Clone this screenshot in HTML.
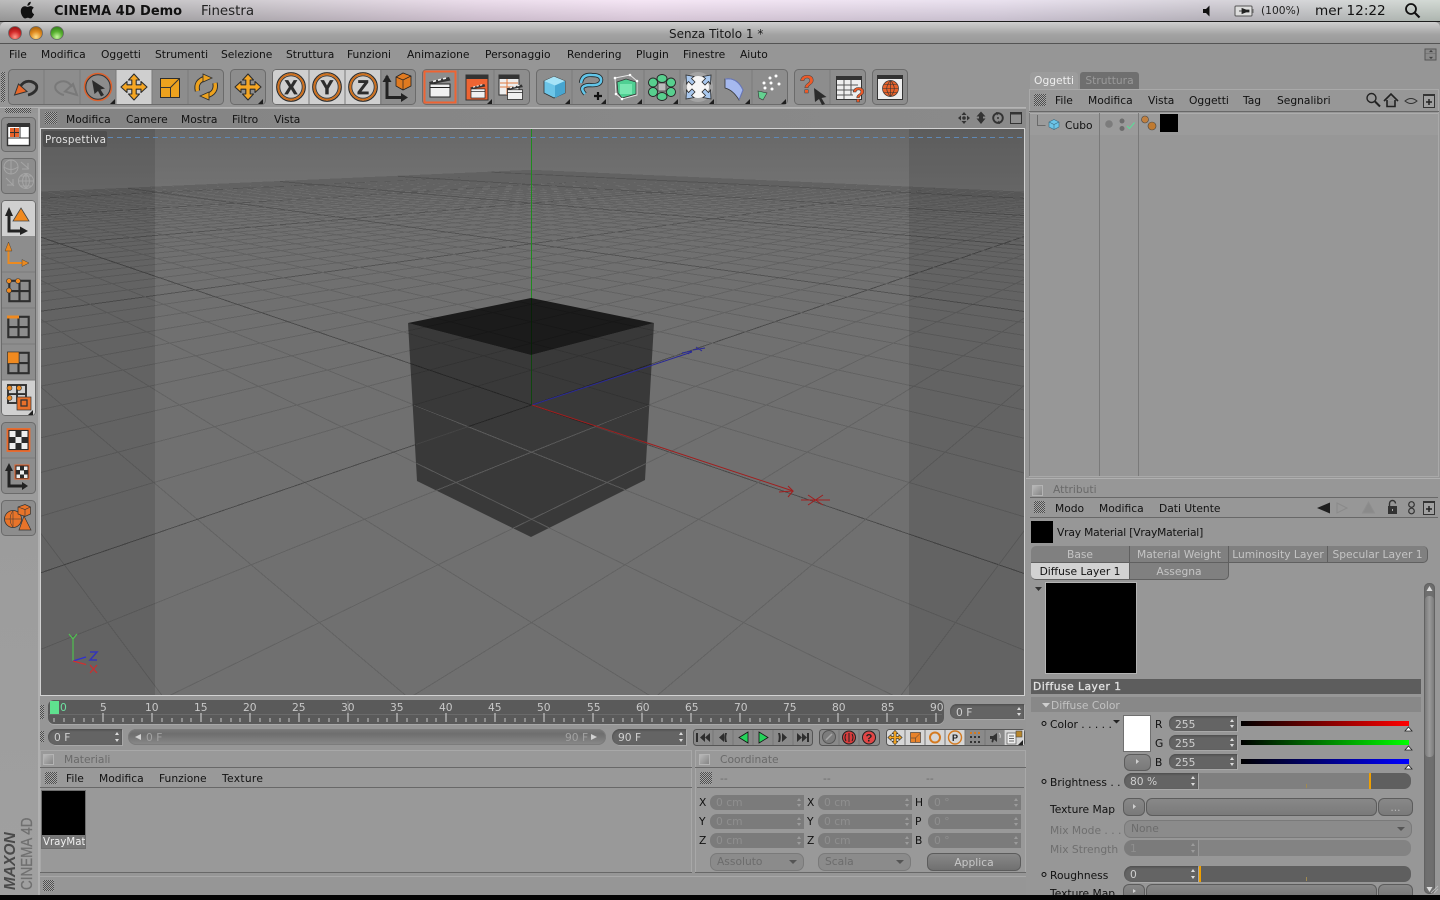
<!DOCTYPE html>
<html><head><meta charset="utf-8"><title>CINEMA 4D</title>
<style>
html,body{margin:0;padding:0;width:1440px;height:900px;overflow:hidden;background:#969696}
body{position:relative;font-family:"DejaVu Sans","Liberation Sans",sans-serif;font-size:10.7px;color:#111}
.t{position:absolute;white-space:nowrap;line-height:14px;margin-top:1px}
.b{position:absolute}
.gr{color:#6a6a6a}
.grip{position:absolute;background:conic-gradient(#4e4e4e 25%,#a8a8a8 0 50%,#4e4e4e 0 75%,#a8a8a8 0) 0 0/2px 2px}
.f{position:absolute;background:#646464;border-radius:7px 0 0 7px;color:#cfcfcf;line-height:17px;padding-left:6px;box-sizing:border-box;box-shadow:inset 0 1px 2px #4a4a4a,1px 1px 0 #a8a8a8}
.f::before,.f::after{content:"";position:absolute;right:3px;border-left:2.5px solid transparent;border-right:2.5px solid transparent}
.f::before{top:3px;border-bottom:3px solid #ddd}
.f::after{bottom:3px;border-top:3px solid #ddd}
.d{background:#7b7b7b;color:#8f8f8f;box-shadow:none;line-height:15px}
.d::before{border-bottom-color:#9c9c9c}.d::after{border-top-color:#9c9c9c}
.p{position:absolute;background:linear-gradient(#888,#7a7a7a);border:1px solid #5c5c5c;border-radius:6px;box-sizing:border-box}
.dd{position:absolute;background:#8b8b8b;border:1px solid #7a7a7a;border-radius:7px;box-sizing:border-box;color:#6c6c6c;line-height:16px;padding-left:6px}
.dd::after{content:"";position:absolute;right:6px;top:6px;border-left:4px solid transparent;border-right:4px solid transparent;border-top:4px solid #555}
.tab{position:absolute;height:17px;width:99px;background:#808080;color:#c4c4c4;text-align:center;line-height:17px;box-sizing:border-box;border-right:1px solid #606060;border-bottom:1px solid #606060}
.ck{position:absolute;width:9px;height:9px;background:linear-gradient(135deg,#b8b8b8,#858585);border:1px solid #b4b4b4}
.hl{position:absolute;height:1px;background:#686868}
</style></head><body>

<!-- mac menu bar -->
<div class="b" style="left:0;top:0;width:1440px;height:21px;background:linear-gradient(rgba(255,255,255,.22),rgba(0,0,0,.12)),linear-gradient(90deg,#a9a9a9 0,#bdbabe 200px,#e6d4e6 480px,#f2dff2 640px,#e3d9ea 1000px,#cdc8d2 1200px,#c6cfc8 1440px)"></div>
<div class="b" style="left:0;top:21px;width:1440px;height:1px;background:#1c1c1c"></div>
<svg class="b" style="left:18px;top:1px" width="20" height="19" viewBox="0 0 20 19"><path d="M14 10c0-2 1.600-3 1.800-3.200-1-1.400-2.500-1.600-3-1.700-1.300-.1-2.500.8-3.100.8-.7 0-1.700-.8-2.800-.7C5.500 5.200 4.200 6 3.500 7.200c-1.500 2.500-.4 6.200 1 8.200.7 1 1.500 2.100 2.600 2 1-.0 1.400-.7 2.700-.7s1.600.7 2.700.7 1.800-1 2.500-2c.8-1.100 1.100-2.200 1.100-2.300-.1 0-2.100-.8-2.100-3.100zM11.900 3.500c.6-.7 1-1.700.9-2.700-.9 0-1.900.6-2.500 1.300-.5.600-1 1.600-.9 2.600 1 .1 1.900-.5 2.500-1.200z" fill="#111"/></svg>
<div class="t" style="left:54px;top:4px;font-size:13px;font-weight:bold">CINEMA 4D Demo</div>
<div class="t" style="left:201px;top:4px;font-size:13.4px;color:#222">Finestra</div>
<div class="t" style="left:1261px;top:3px;font-size:10.7px;color:#222">(100%)</div>
<div class="t" style="left:1315px;top:3px;font-size:13.6px;color:#111">mer 12:22</div>

<!-- window title -->
<div class="b" style="left:0;top:22px;width:1440px;height:21px;background:linear-gradient(#cfcfcf,#a2a2a2 60%,#9a9a9a);border-radius:5px 5px 0 0"></div>
<div class="b" style="left:0;top:43px;width:1440px;height:1px;background:#545454"></div>
<div class="t" style="left:669px;top:26px;font-size:12px;color:#1a1a1a">Senza Titolo 1 *</div>

<!-- menu -->
<div class="t" style="left:9px;top:47px">File</div>
<div class="t" style="left:41px;top:47px">Modifica</div>
<div class="t" style="left:101px;top:47px">Oggetti</div>
<div class="t" style="left:155px;top:47px">Strumenti</div>
<div class="t" style="left:221px;top:47px">Selezione</div>
<div class="t" style="left:286px;top:47px">Struttura</div>
<div class="t" style="left:347px;top:47px">Funzioni</div>
<div class="t" style="left:407px;top:47px">Animazione</div>
<div class="t" style="left:485px;top:47px">Personaggio</div>
<div class="t" style="left:567px;top:47px">Rendering</div>
<div class="t" style="left:636px;top:47px">Plugin</div>
<div class="t" style="left:683px;top:47px">Finestre</div>
<div class="t" style="left:740px;top:47px">Aiuto</div>

<div class="b" style="left:0;top:107px;width:1026px;height:1px;background:#b4b4b4"></div>
<div class="grip" style="left:1px;top:72px;width:4px;height:30px"></div>
<!-- left col shade -->
<div class="b" style="left:0;top:113px;width:38px;height:782px;background:linear-gradient(#989898,#a0a0a0)"></div>
<div class="grip" style="left:5px;top:108px;width:26px;height:5px"></div>
<div class="b" style="left:38px;top:108px;width:2px;height:787px;background:#b0b0b0"></div>

<!-- viewport header -->
<div class="b" style="left:40px;top:108px;width:986px;height:21px;background:linear-gradient(90deg,#848484,#8a8a8a);border-top:1px solid #aaa;box-sizing:border-box"></div>
<div class="grip" style="left:45px;top:112px;width:12px;height:12px"></div>
<div class="t" style="left:66px;top:112px">Modifica</div>
<div class="t" style="left:126px;top:112px">Camere</div>
<div class="t" style="left:181px;top:112px">Mostra</div>
<div class="t" style="left:232px;top:112px">Filtro</div>
<div class="t" style="left:274px;top:112px">Vista</div>

<!-- viewport -->
<div class="b" style="left:40px;top:128px;width:985px;height:568px;border:1px solid #d2d2d2;box-sizing:border-box"></div>
<svg id="vp" class="b" style="left:41px;top:129px" width="983" height="566" viewBox="41 129 983 566">
<defs>
<linearGradient id="sky" x1="0" y1="0" x2="0" y2="1"><stop offset="0" stop-color="#686868"/><stop offset="1" stop-color="#747474"/></linearGradient>
<clipPath id="low"><polygon points="414,405 532,451 649,405 645,480 531,537 417,481"/></clipPath>
</defs>
<rect x="41" y="129" width="983" height="70" fill="url(#sky)"/>
<rect x="41" y="195" width="983" height="500" fill="#707070"/>
<g id="grid" shape-rendering="crispEdges"></g>
<line x1="531.5" y1="129" x2="531.5" y2="405" stroke="#1f8a1f" shape-rendering="crispEdges"/>
<polygon points="408,323 531,355 654,323 645,480 531,537 417,481" fill="#000" fill-opacity=".49"/>
<polygon points="408,323 531,298 654,323 531,355" fill="#000" fill-opacity=".76"/>
<g clip-path="url(#low)" shape-rendering="crispEdges"><use href="#grid" opacity=".85"/></g>
<g fill="none" stroke-width="1">
<path d="M532 405L692 352M682 353L692 351L688 354M693 350L705 348M696 347L702 351" stroke="#2a2a96"/>
<path d="M532 405L793 491M779 492L793 491L788 486M788 497L793 491M801 500L830 500M808 495L823 505M808 505L823 495" stroke="#a01f1f"/>
</g>
<rect x="41" y="129" width="114" height="566" fill="#000" opacity=".11"/>
<rect x="909" y="129" width="115" height="566" fill="#000" opacity=".11"/>
<line x1="108" y1="137.500" x2="1022" y2="137.500" stroke="#5f88b4" stroke-dasharray="5 4"/>
<rect x="43" y="131" width="64" height="16" rx="2" fill="#4a4a4a" fill-opacity=".75"/>
<g fill="none" stroke-width="1.200">
<path d="M73 661V643M69 634L73 639L77 634M73 639V643" stroke="#4fc04f"/>
<path d="M73 661L86 657" stroke="#3030d0"/><path d="M90 652H97L90 660H97" stroke="#3434b8" stroke-width="1.500"/>
<path d="M73 661L86 664.500" stroke="#d03030"/><path d="M90 665L97 673M97 665L90 673" stroke="#c83030" stroke-width="1.300"/>
</g>
</svg>
<div class="t" style="left:45px;top:132px;font-size:10.4px;color:#e2e2e2;letter-spacing:.25px">Prospettiva</div>

<!-- bottom panels backgrounds -->
<div class="b" style="left:40px;top:750px;width:652px;height:123px;background:#999;box-shadow:inset 0 0 0 1px #a8a8a8"></div>
<div class="ck" style="left:43px;top:754px"></div>
<div class="t gr" style="left:64px;top:752px">Materiali</div>
<div class="hl" style="left:40px;top:767px;width:652px"></div>
<div class="grip" style="left:45px;top:772px;width:12px;height:12px"></div>
<div class="t" style="left:66px;top:771px">File</div>
<div class="t" style="left:99px;top:771px">Modifica</div>
<div class="t" style="left:159px;top:771px">Funzione</div>
<div class="t" style="left:222px;top:771px;letter-spacing:.3px">Texture</div>
<div class="hl" style="left:40px;top:787px;width:652px"></div>
<div class="b" style="left:41px;top:790px;width:45px;height:59px;background:#777;box-sizing:border-box;border:1px solid #6d6d6d"></div>
<div class="b" style="left:42px;top:791px;width:43px;height:44px;background:#000"></div>
<div class="t" style="left:43px;top:835px;width:42px;overflow:hidden;color:#f0f0f0;font-size:10.2px">VrayMat</div>
<div class="hl" style="left:40px;top:872px;width:652px"></div>

<div class="b" style="left:695px;top:750px;width:331px;height:123px;background:#999;box-shadow:inset 0 0 0 1px #a8a8a8"></div>
<div class="ck" style="left:699px;top:754px"></div>
<div class="t gr" style="left:720px;top:752px">Coordinate</div>
<div class="hl" style="left:695px;top:767px;width:331px"></div>
<div class="grip" style="left:700px;top:772px;width:12px;height:12px"></div>
<div class="t gr" style="left:720px;top:771px">--</div><div class="t gr" style="left:823px;top:771px">--</div><div class="t gr" style="left:926px;top:771px">--</div>
<div class="hl" style="left:697px;top:787px;width:327px"></div>
<div class="hl" style="left:695px;top:872px;width:331px"></div>

<div class="t" style="left:699px;top:795px">X</div><div class="t" style="left:699px;top:814px">Y</div><div class="t" style="left:699px;top:833px">Z</div>
<div class="t" style="left:807px;top:795px">X</div><div class="t" style="left:807px;top:814px">Y</div><div class="t" style="left:807px;top:833px">Z</div>
<div class="t" style="left:915px;top:795px">H</div><div class="t" style="left:915px;top:814px">P</div><div class="t" style="left:915px;top:833px">B</div>
<div class="f d" style="left:710px;top:795px;width:94px;height:15px">0 cm</div>
<div class="f d" style="left:710px;top:814px;width:94px;height:15px">0 cm</div>
<div class="f d" style="left:710px;top:833px;width:94px;height:15px">0 cm</div>
<div class="f d" style="left:818px;top:795px;width:94px;height:15px">0 cm</div>
<div class="f d" style="left:818px;top:814px;width:94px;height:15px">0 cm</div>
<div class="f d" style="left:818px;top:833px;width:94px;height:15px">0 cm</div>
<div class="f d" style="left:928px;top:795px;width:93px;height:15px">0 °</div>
<div class="f d" style="left:928px;top:814px;width:93px;height:15px">0 °</div>
<div class="f d" style="left:928px;top:833px;width:93px;height:15px">0 °</div>
<div class="dd" style="left:710px;top:853px;width:94px;height:18px">Assoluto</div>
<div class="dd" style="left:818px;top:853px;width:93px;height:18px">Scala</div>
<div class="p" style="left:927px;top:853px;width:94px;height:18px;color:#c8c8c8;text-align:center;line-height:18px;background:linear-gradient(#888,#707070)">Applica</div>

<!-- status -->
<div class="b" style="left:40px;top:876px;width:986px;height:19px;background:#969696;border-top:1px solid #a8a8a8;box-sizing:border-box"></div>
<div class="grip" style="left:43px;top:880px;width:11px;height:11px"></div>

<!-- timeline -->
<div class="grip" style="left:40px;top:705px;width:4px;height:14px"></div>
<div class="grip" style="left:40px;top:731px;width:4px;height:11px"></div>
<div class="b" style="left:48px;top:700px;width:896px;height:24px;background:#5a5a5a;border-radius:6px;box-shadow:0 1px 0 #a8a8a8"></div>
<div class="b" style="left:50px;top:701px;width:9px;height:14px;background:#5fe18f"></div>
<svg class="b" style="left:48px;top:700px" width="896" height="24" viewBox="48 700 896 24" shape-rendering="crispEdges">
<line x1="49" y1="714.500" x2="942" y2="714.500" stroke="#6a6a6a"/>
<path d="M348 701V722M642 701V722" stroke="#7a7a7a"/>
<path d="M54 718V722M64 718V722M74 718V722M84 718V722M93 718V722M113 718V722M123 718V722M133 718V722M142 718V722M162 718V722M172 718V722M182 718V722M191 718V722M211 718V722M221 718V722M231 718V722M240 718V722M260 718V722M270 718V722M280 718V722M289 718V722M309 718V722M319 718V722M329 718V722M338 718V722M358 718V722M368 718V722M378 718V722M387 718V722M407 718V722M417 718V722M427 718V722M436 718V722M456 718V722M466 718V722M476 718V722M485 718V722M505 718V722M515 718V722M525 718V722M534 718V722M554 718V722M564 718V722M574 718V722M583 718V722M603 718V722M613 718V722M623 718V722M632 718V722M652 718V722M662 718V722M672 718V722M681 718V722M701 718V722M711 718V722M721 718V722M730 718V722M750 718V722M760 718V722M770 718V722M779 718V722M799 718V722M809 718V722M819 718V722M828 718V722M848 718V722M858 718V722M868 718V722M877 718V722M897 718V722M907 718V722M917 718V722M926 718V722" stroke="#c4c4c4"/>
<path d="M103 713V722M152 713V722M201 713V722M250 713V722M299 713V722M348 713V722M397 713V722M446 713V722M495 713V722M544 713V722M593 713V722M642 713V722M691 713V722M740 713V722M789 713V722M838 713V722M887 713V722M936 713V722" stroke="#d8d8d8"/>
</svg>
<div class="t" style="left:60px;top:700px;color:#6de0a0">0</div>
<div class="t" style="left:100px;top:700px;color:#c8c8c8">5</div>
<div class="t" style="left:145px;top:700px;color:#c8c8c8">10</div>
<div class="t" style="left:194px;top:700px;color:#c8c8c8">15</div>
<div class="t" style="left:243px;top:700px;color:#c8c8c8">20</div>
<div class="t" style="left:292px;top:700px;color:#c8c8c8">25</div>
<div class="t" style="left:341px;top:700px;color:#c8c8c8">30</div>
<div class="t" style="left:390px;top:700px;color:#c8c8c8">35</div>
<div class="t" style="left:439px;top:700px;color:#c8c8c8">40</div>
<div class="t" style="left:488px;top:700px;color:#c8c8c8">45</div>
<div class="t" style="left:537px;top:700px;color:#c8c8c8">50</div>
<div class="t" style="left:587px;top:700px;color:#c8c8c8">55</div>
<div class="t" style="left:636px;top:700px;color:#c8c8c8">60</div>
<div class="t" style="left:685px;top:700px;color:#c8c8c8">65</div>
<div class="t" style="left:734px;top:700px;color:#c8c8c8">70</div>
<div class="t" style="left:783px;top:700px;color:#c8c8c8">75</div>
<div class="t" style="left:832px;top:700px;color:#c8c8c8">80</div>
<div class="t" style="left:881px;top:700px;color:#c8c8c8">85</div>
<div class="t" style="left:930px;top:700px;color:#c8c8c8">90</div>
<div class="f" style="left:950px;top:704px;width:74px;height:15px">0 F</div>
<div class="f" style="left:48px;top:729px;width:74px;height:16px;border-radius:8px 0 0 8px">0 F</div>
<div class="b" style="left:128px;top:729px;width:478px;height:16px;border-radius:8px;background:linear-gradient(#7a7a7a,#6e6e6e 30%,#8a8a8a);box-shadow:inset 0 0 0 1px #7c7c7c"></div>
<div class="t" style="left:146px;top:730px;color:#a2a2a2">0 F</div>
<div class="t" style="left:565px;top:730px;color:#a2a2a2">90 F</div>
<div class="f" style="left:612px;top:729px;width:74px;height:16px;border-radius:8px 0 0 8px">90 F</div>

<!-- object manager -->
<div class="b" style="left:1030px;top:72px;width:48px;height:17px;background:#9c9c9c;border-radius:4px 4px 0 0;color:#eee;line-height:17px;text-align:center">Oggetti</div>
<div class="b" style="left:1080px;top:72px;width:59px;height:17px;background:#6f6f6f;border-radius:3px 3px 0 0;color:#9a9a9a;line-height:17px;text-align:center">Struttura</div>
<div class="b" style="left:1029px;top:89px;width:410px;height:388px;background:#979797;box-shadow:inset 0 0 0 1px #a9a9a9"></div>
<div class="grip" style="left:1034px;top:94px;width:12px;height:12px"></div>
<div class="t" style="left:1055px;top:93px">File</div>
<div class="t" style="left:1088px;top:93px">Modifica</div>
<div class="t" style="left:1148px;top:93px">Vista</div>
<div class="t" style="left:1189px;top:93px">Oggetti</div>
<div class="t" style="left:1243px;top:93px">Tag</div>
<div class="t" style="left:1277px;top:93px">Segnalibri</div>
<div class="hl" style="left:1029px;top:111px;width:410px"></div>
<div class="b" style="left:1030px;top:113px;width:408px;height:1px;background:#adadad"></div>
<div class="b" style="left:1030px;top:114px;width:408px;height:21px;background:#9b9b9b"></div>
<div class="b" style="left:1099px;top:113px;width:1px;height:363px;background:#7a7a7a"></div>
<div class="b" style="left:1138px;top:113px;width:1px;height:363px;background:#7a7a7a"></div>
<div class="b" style="left:1029px;top:113px;width:1px;height:363px;background:#7a7a7a"></div>
<div class="t" style="left:1065px;top:118px">Cubo</div>
<div class="b" style="left:1160px;top:114px;width:18px;height:18px;background:#000"></div>

<!-- attributes -->
<div class="b" style="left:1026px;top:478px;width:414px;height:417px;background:#979797;box-shadow:inset 0 1px 0 #b0b0b0"></div>
<div class="ck" style="left:1032px;top:485px"></div>
<div class="t gr" style="left:1053px;top:482px">Attributi</div>
<div class="hl" style="left:1030px;top:497px;width:408px"></div>
<div class="grip" style="left:1034px;top:501px;width:11px;height:12px"></div>
<div class="t" style="left:1055px;top:501px">Modo</div>
<div class="t" style="left:1099px;top:501px">Modifica</div>
<div class="t" style="left:1159px;top:501px">Dati Utente</div>
<div class="hl" style="left:1030px;top:517px;width:408px"></div>
<div class="b" style="left:1031px;top:521px;width:22px;height:22px;background:#000"></div>
<div class="t" style="left:1057px;top:525px;letter-spacing:-.18px">Vray Material [VrayMaterial]</div>
<div class="tab" style="left:1031px;top:546px;border-radius:5px 0 0 0">Base</div>
<div class="tab" style="left:1130px;top:546px">Material Weight</div>
<div class="tab" style="left:1229px;top:546px">Luminosity Layer</div>
<div class="tab" style="left:1328px;top:546px;border-radius:0 5px 5px 0;width:100px">Specular Layer 1</div>
<div class="tab" style="left:1031px;top:563px;background:#d2d2d2;color:#111;border-radius:0 0 0 5px">Diffuse Layer 1</div>
<div class="tab" style="left:1130px;top:563px;border-radius:0 0 5px 0">Assegna</div>
<div class="b" style="left:1045px;top:582px;width:92px;height:92px;background:#000;box-sizing:border-box;border:1px solid #b4b4b4"></div>
<div class="b" style="left:1031px;top:679px;width:390px;height:15px;background:#5d5d5d;color:#e2e2e2;line-height:15px;padding-left:2px;box-sizing:border-box;letter-spacing:.5px;-webkit-text-stroke:.3px #e2e2e2">Diffuse Layer 1</div>
<div class="b" style="left:1031px;top:697px;width:390px;height:15px;background:#888;color:#c2c2c2;line-height:17px;padding-left:20px;box-sizing:border-box">Diffuse Color</div>

<div class="t" style="left:1050px;top:717px">Color . . . . .</div>
<div class="b" style="left:1123px;top:715px;width:28px;height:37px;background:#fff;box-sizing:border-box;border:1px solid #707070"></div>
<div class="t" style="left:1155px;top:717px">R</div><div class="t" style="left:1155px;top:736px">G</div><div class="t" style="left:1155px;top:755px">B</div>
<div class="f" style="left:1169px;top:716px;width:68px;height:15px">255</div>
<div class="f" style="left:1169px;top:735px;width:68px;height:15px">255</div>
<div class="f" style="left:1169px;top:754px;width:68px;height:15px">255</div>
<div class="b" style="left:1241px;top:721px;width:168px;height:5px;background:linear-gradient(90deg,#000,#f00)"></div>
<div class="b" style="left:1241px;top:740px;width:168px;height:5px;background:linear-gradient(90deg,#000,#0f0)"></div>
<div class="b" style="left:1241px;top:759px;width:168px;height:5px;background:linear-gradient(90deg,#000,#00f)"></div>
<div class="p" style="left:1124px;top:754px;width:27px;height:17px"></div>
<div class="t" style="left:1050px;top:775px">Brightness . .</div>
<div class="f" style="left:1124px;top:773px;width:74px;height:16px;border-radius:8px 0 0 8px">80 %</div>
<div class="b" style="left:1199px;top:773px;width:170px;height:16px;background:#7f7f7f"></div>
<div class="b" style="left:1369px;top:773px;width:2px;height:16px;background:#f0a000"></div>
<div class="b" style="left:1371px;top:773px;width:40px;height:16px;background:#5f5f5f;border-radius:0 7px 7px 0"></div>
<div class="b" style="left:1306px;top:784px;width:1px;height:4px;background:#a08a50"></div>
<div class="t" style="left:1050px;top:802px">Texture Map</div>
<div class="p" style="left:1123px;top:798px;width:22px;height:18px"></div>
<div class="p" style="left:1146px;top:798px;width:231px;height:18px"></div>
<div class="p" style="left:1378px;top:798px;width:35px;height:18px;color:#b8b8b8;text-align:center;line-height:18px">...</div>
<div class="t" style="left:1050px;top:823px;color:#6f6f6f">Mix Mode . . .</div>
<div class="dd" style="left:1124px;top:820px;width:288px;height:18px">None</div>
<div class="t" style="left:1050px;top:842px;color:#6f6f6f">Mix Strength</div>
<div class="f d" style="left:1124px;top:840px;width:74px;height:16px;border-radius:8px 0 0 8px;line-height:17px">1</div>
<div class="b" style="left:1199px;top:840px;width:212px;height:16px;background:#838383;border-radius:0 7px 7px 0"></div>
<div class="t" style="left:1050px;top:868px">Roughness</div>
<div class="f" style="left:1124px;top:866px;width:74px;height:16px;border-radius:8px 0 0 8px">0</div>
<div class="b" style="left:1199px;top:866px;width:212px;height:16px;background:#5f5f5f;border-radius:0 7px 7px 0"></div>
<div class="b" style="left:1199px;top:866px;width:2px;height:16px;background:#f0a000"></div>
<div class="b" style="left:1306px;top:877px;width:1px;height:4px;background:#a08a50"></div>
<div class="t" style="left:1050px;top:886.500px;height:12px;line-height:12px">Texture Map</div>
<div class="p" style="left:1123px;top:884px;width:22px;height:11px;border-bottom:0;border-radius:6px 6px 0 0"></div>
<div class="p" style="left:1146px;top:884px;width:231px;height:11px;border-bottom:0;border-radius:6px 6px 0 0"></div>
<div class="p" style="left:1378px;top:884px;width:35px;height:11px;border-bottom:0;border-radius:6px 6px 0 0"></div>
<!-- scrollbar -->
<div class="b" style="left:1424px;top:583px;width:11px;height:311px;background:#6f6f6f;border-radius:5px;box-shadow:inset 0 0 2px #4a4a4a"></div>
<div class="b" style="left:1425px;top:596px;width:9px;height:161px;background:linear-gradient(90deg,#7a7a7a,#9a9a9a,#7a7a7a);border-radius:4px"></div>

<!-- logo -->
<div class="t" style="left:18px;top:876px;margin:0;font-family:'Liberation Sans',sans-serif;font-weight:bold;font-style:italic;font-size:15.500px;color:#4a4a4a;transform-origin:0 100%;transform:rotate(-90deg);line-height:14px;height:14px">MAXON</div>
<div class="t" style="left:35px;top:876px;margin:0;font-family:'Liberation Sans',sans-serif;font-size:16px;color:#707070;-webkit-text-stroke:.3px #707070;transform-origin:0 100%;transform:rotate(-90deg) scaleX(.84);line-height:14px;height:14px">CINEMA 4D</div>

<!-- black bottom -->
<div class="b" style="left:0;top:895px;width:1440px;height:5px;background:#050505"></div>

<!-- icon layer -->
<svg class="b" style="left:0;top:0;pointer-events:none" width="1440" height="900" viewBox="0 0 1440 900" font-family="'Liberation Sans',sans-serif">
<defs>
<radialGradient id="rb" cx=".5" cy=".8" r=".7"><stop offset="0" stop-color="#ff9a8a"/><stop offset=".6" stop-color="#d42a2a"/><stop offset="1" stop-color="#a01818"/></radialGradient>
<radialGradient id="yb" cx=".5" cy=".8" r=".7"><stop offset="0" stop-color="#ffe08a"/><stop offset=".6" stop-color="#e08a20"/><stop offset="1" stop-color="#b06a10"/></radialGradient>
<radialGradient id="gb" cx=".5" cy=".8" r=".7"><stop offset="0" stop-color="#c8f8a0"/><stop offset=".6" stop-color="#58b030"/><stop offset="1" stop-color="#3a8a20"/></radialGradient>
<path id="mv" d="M0-13L5.500-7H2.200V-2.200H7V-5.500L13 0L7 5.500V2.200H2.200V7H5.500L0 13L-5.500 7H-2.200V2.200H-7V5.500L-13 0L-7-5.500V-2.200H-2.200V-7H-5.500Z" fill="#f5a623" stroke="#2d2d2d" stroke-width="1.100" stroke-linejoin="round"/>
<path id="tri" d="M0 5H5V0Z" fill="#1e1e1e"/>
<g id="clap"><rect x="-10" y="-3" width="20" height="13" fill="#f0f0f0" stroke="#222"/><path d="M-11-5L9-10L10.500-6.500L-10-2.500Z" fill="#333"/><path d="M-7-5.500L-4-6.300M-2-6.800L1-7.600M3-8.100L6-8.900" stroke="#eee" stroke-width="1.600"/><path d="M-10 0.500H10" stroke="#222"/></g>
<g id="grd"><rect x="-12" y="-12" width="24" height="24" fill="none" stroke="#2e2e2e" stroke-width="2.500"/><path d="M0-12V12M-12 0H12" stroke="#2e2e2e" stroke-width="2.500"/></g>
</defs>
<!-- traffic lights -->
<circle cx="15" cy="33" r="6.500" fill="url(#rb)" stroke="#666" stroke-width=".8"/>
<circle cx="36" cy="33" r="6.500" fill="url(#yb)" stroke="#666" stroke-width=".8"/>
<circle cx="57" cy="33" r="6.500" fill="url(#gb)" stroke="#666" stroke-width=".8"/>
<!-- menubar icons -->
<path d="M1203 9h3l3.500-3.500v11L1206 13h-3z" fill="#111"/>
<rect x="1235" y="6" width="17" height="10" rx="1" fill="#ddd" stroke="#555"/><rect x="1252" y="9" width="1.500" height="4" fill="#666"/><path d="M1239 11h3m0-2.500v5l4-1.500h3v-2h-3z" stroke="#222" fill="#222" stroke-width=".8"/>
<circle cx="1411" cy="9" r="5" fill="none" stroke="#111" stroke-width="1.800"/><path d="M1415 13l4.500 4.500" stroke="#111" stroke-width="2.200"/>
<rect x="1425" y="49" width="11" height="11" fill="#8a8a8a" stroke="#555"/><path d="M1425 53.500h11M1431 50l-2 2h4zM1431 59l-2-2h4z" fill="#333" stroke="#666" stroke-width=".5"/>

<!-- top toolbar groups -->
<g fill="#8d8d8d" stroke="#6b6b6b">
<rect x="8.500" y="69.500" width="215" height="35" rx="4"/><rect x="230.500" y="69.500" width="35" height="35" rx="4"/><rect x="272.500" y="69.500" width="143" height="35" rx="4"/><rect x="422.500" y="69.500" width="107" height="35" rx="4"/><rect x="536.500" y="69.500" width="251" height="35" rx="4"/><rect x="794.500" y="69.500" width="71" height="35" rx="4"/><rect x="872.500" y="69.500" width="35" height="35" rx="4"/>
</g>
<rect x="116" y="70" width="36" height="34" fill="#cfcfcf"/>
<path d="M273 73a3 3 0 0 1 3-3h104v34H276a3 3 0 0 1-3-3z" fill="#cfcfcf"/>
<path d="M44 70V104M80 70V104M116 70V104M152 70V104M188 70V104M309 70V104M345 70V104M381 70V104M458 70V104M494 70V104M572 70V104M608 70V104M644 70V104M680 70V104M716 70V104M752 70V104M830 70V104" stroke="#7a7a7a"/>
<!-- undo -->
<path d="M20 87Q24 80 31 81.500Q39 84 36 90Q33 94 28 95" fill="none" stroke="#2e2e2e" stroke-width="2.800"/><path d="M14.500 95L18.500 84L27 91.500Z" fill="#e8682a" stroke="#333"/>
<!-- redo -->
<path d="M72 87Q68 80 61 81.500Q53 84 56 90Q59 94 64 95M77 95L73 84L65 91.500Z" fill="none" stroke="#797979" stroke-width="2"/>
<!-- select -->
<circle cx="98" cy="87" r="13.500" fill="#8d8d8d" stroke="#e0602a" stroke-width="1.500"/><circle cx="98" cy="87" r="12.200" fill="none" stroke="#333"/><path d="M92 80L105 88.500L100.500 89.500L104 95L101 96.500L98 91L94.500 94Z" fill="#2b2b2b"/>
<use href="#tri" x="110" y="99"/>
<use href="#mv" x="134" y="87"/>
<!-- scale -->
<rect x="160.500" y="78.500" width="19" height="19" fill="#eda21e" stroke="#2d2d2d"/><path d="M161 87.500H170.500V97M170.500 87.500L179.500 78.500" fill="none" stroke="#333"/>
<!-- rotate -->
<path d="M197.500 91Q195 81 206 78M215 83Q217 93 206 96" fill="none" stroke="#2e2e2e" stroke-width="5.400"/><path d="M197.500 91Q195 81 206 78M215 83Q217 93 206 96" fill="none" stroke="#eda21e" stroke-width="3.400"/><path d="M203 74L212 78L203 82ZM209 100L200 96L209 92Z" fill="#eda21e" stroke="#2e2e2e" stroke-width=".8"/>
<use href="#mv" x="248" y="87"/><use href="#tri" x="258" y="99"/>
<!-- XYZ -->
<g fill="none"><circle cx="291" cy="87" r="14.300" stroke="#2e2e2e" stroke-width="1.200"/><circle cx="291" cy="87" r="12.700" stroke="#d0701c" stroke-width="2"/><circle cx="291" cy="87" r="11.200" stroke="#333" stroke-width=".9"/><circle cx="327" cy="87" r="14.300" stroke="#2e2e2e" stroke-width="1.200"/><circle cx="327" cy="87" r="12.700" stroke="#d0701c" stroke-width="2"/><circle cx="327" cy="87" r="11.200" stroke="#333" stroke-width=".9"/><circle cx="363" cy="87" r="14.300" stroke="#2e2e2e" stroke-width="1.200"/><circle cx="363" cy="87" r="12.700" stroke="#d0701c" stroke-width="2"/><circle cx="363" cy="87" r="11.200" stroke="#333" stroke-width=".9"/></g>
<g font-weight="bold" font-size="19" fill="#2d2d2d" stroke="#2d2d2d" stroke-width=".7" text-anchor="middle"><text x="291" y="94">X</text><text x="327" y="94">Y</text><text x="363" y="94">Z</text></g>
<!-- world axes -->
<path d="M387 76V97.500H405" fill="none" stroke="#222" stroke-width="3"/><path d="M382.500 82L387 74.500L391.500 82ZM401 93L408 97.500L401 102Z" fill="#222"/>
<path d="M396 77L403 73L411 76V86L403 90L396 86Z" fill="#e07a20" stroke="#222" stroke-width=".8"/><path d="M396 77L403 80L411 76M403 80V90" stroke="#222" fill="none" stroke-width=".7"/>
<!-- clappers -->
<rect x="424.500" y="71.500" width="31" height="31" fill="none" stroke="#ee6433" stroke-width="2"/>
<use href="#clap" x="440" y="87"/>
<rect x="466" y="75" width="22" height="25" fill="#ee6433" stroke="#333"/><rect x="466" y="75" width="22" height="4" fill="#333"/><use href="#clap" transform="translate(478 91) scale(.7)"/><use href="#tri" x="487" y="99"/>
<rect x="499" y="75" width="20" height="20" fill="#eee" stroke="#333"/><rect x="499" y="75" width="20" height="4" fill="#333"/><path d="M500 83H518M500 87H518M507 79V95" stroke="#e07a40"/><use href="#clap" transform="translate(515 92) scale(.75)"/>
<!-- cube -->
<path d="M554 76.500L565 81V93L554 98L544 93V81Z" fill="#6cc5e8" stroke="#333" stroke-width=".8"/><path d="M544 81L554 76.500L565 81L555 85.500Z" fill="#a6e3f7"/><path d="M555 85.500V98L565 93V81Z" fill="#47a5d0"/><use href="#tri" x="565" y="99"/>
<!-- spline -->
<path d="M581 83Q582 74 592 75Q602 75 601 81Q600 86 589 85Q578 86 585 94" fill="none" stroke="#222" stroke-width="4.200"/><path d="M581 83Q582 74 592 75Q602 75 601 81Q600 86 589 85Q578 86 585 94" fill="none" stroke="#62c5e8" stroke-width="2.600"/><path d="M594 96H602M598 92V100" stroke="#111" stroke-width="2.200"/><use href="#tri" x="601" y="99"/>
<!-- nurbs -->
<path d="M615 78L630 75L637 81V95L622 99L616 94Z" fill="none" stroke="#e8e8e8" stroke-width=".9"/><path d="M617 82L626 79L636 82V94L622 98L618 93Z" fill="#4fcf92" stroke="#333" stroke-width=".8"/><path d="M620 84H632V94H620Z" fill="#78e6b0"/><circle cx="615" cy="78" r="1.300" fill="#fff"/><circle cx="630" cy="75" r="1.300" fill="#fff"/><circle cx="637" cy="81" r="1.300" fill="#fff"/><circle cx="622" cy="99" r="1.300" fill="#fff"/><circle cx="616" cy="94" r="1.300" fill="#fff"/><use href="#tri" x="637" y="99"/>
<!-- array -->
<g fill="#58cf8e" stroke="#222" stroke-width=".9"><ellipse cx="662" cy="78.500" rx="5" ry="4"/><ellipse cx="662" cy="96.500" rx="5" ry="4"/><ellipse cx="653" cy="82.500" rx="4.500" ry="4.500"/><ellipse cx="671" cy="82.500" rx="4.500" ry="4.500"/><ellipse cx="653" cy="92" rx="4.500" ry="4.500"/><ellipse cx="671" cy="92" rx="4.500" ry="4.500"/></g><rect x="658" y="83" width="8" height="8" fill="#bbb" stroke="#333" stroke-width=".7"/><use href="#tri" x="673" y="99"/>
<!-- generator burst -->
<circle cx="698" cy="87" r="11" fill="#fff" opacity=".9"/><circle cx="698" cy="87" r="15" fill="#fff" opacity=".2"/>
<g fill="#a9c8ee" stroke="#2a2a2a" stroke-width=".8"><path d="M686 75L694 76.500L691.500 78.500L695 82L692 85L688.500 81.500L686.500 84Z"/><path d="M711 75L703 76.500L705.500 78.500L702 82L705 85L708.500 81.500L710.500 84Z"/><path d="M686 99L694 97.500L691.500 95.500L695 92L692 89L688.500 92.500L686.500 90Z"/><path d="M711 99L703 97.500L705.500 95.500L702 92L705 89L708.500 92.500L710.500 90Z"/></g><use href="#tri" x="709" y="99"/>
<!-- deformer -->
<path d="M725 79Q737 77 743 90L739 100Q733 90 725 88Z" fill="#a6b9ee" stroke="#333" stroke-width=".8"/><path d="M725 79Q737 77 743 90L739 100" fill="none" stroke="#6a7ac0"/><use href="#tri" x="745" y="99"/>
<!-- particles -->
<g fill="#fff"><circle cx="770" cy="78" r="1.500"/><circle cx="776" cy="76" r="1.500"/><circle cx="764" cy="83" r="1.500"/><circle cx="771" cy="83" r="1.500"/><circle cx="779" cy="84" r="1.500"/><circle cx="765" cy="88" r="1.500"/><circle cx="772" cy="89" r="1.500"/></g><path d="M758 91L767 93L763 100L759 98Z" fill="#64d090" stroke="#333" stroke-width=".6"/><use href="#tri" x="781" y="99"/>
<!-- help -->
<text x="807" y="93" font-size="25" font-weight="bold" text-anchor="middle" fill="#ee5a28" stroke="#444" stroke-width=".5">?</text><path d="M814 88L826.500 97L821.500 98L825 104L822 105L819 99L815 102Z" fill="#2b2b2b"/>
<rect x="836.500" y="76.500" width="25" height="23" fill="#eee" stroke="#333"/><rect x="837" y="76" width="25" height="4" fill="#333"/><path d="M837 85H858M837 90H855M837 95H853M844 80V99M851 80V95" stroke="#555"/><text x="858.500" y="102" font-size="21" font-weight="bold" text-anchor="middle" fill="#ee5a28" stroke="#333" stroke-width=".5">?</text>
<rect x="877.500" y="75.500" width="25" height="24" fill="#eee" stroke="#333"/><rect x="878" y="75" width="25" height="4" fill="#333"/><circle cx="890.500" cy="88.500" r="8" fill="#e8622a" stroke="#333" stroke-width=".7"/><path d="M882.500 88.500H898.500M884 84.500H897M884 92.500H897M890.500 80.500V96.500M890.500 80.500Q883 88.500 890.500 96.500M890.500 80.500Q898 88.500 890.500 96.500" fill="none" stroke="#333" stroke-width=".6"/>

<!-- left toolbar -->
<g fill="#8d8d8d" stroke="#6b6b6b"><rect x="1.500" y="117.500" width="34" height="34" rx="4"/><rect x="1.500" y="158.500" width="34" height="35" rx="4"/><rect x="1.500" y="200.500" width="34" height="215" rx="4"/><rect x="1.500" y="422.500" width="34" height="71" rx="4"/><rect x="1.500" y="500.500" width="34" height="35" rx="4"/></g>
<path d="M2 236V204a3 3 0 0 1 3-3H32a3 3 0 0 1 3 3V236Z" fill="#d0d0d0"/><path d="M2 380H35V412a3 3 0 0 1-3 3H5a3 3 0 0 1-3-3Z" fill="#d0d0d0"/>
<path d="M2 272H35M2 308H35M2 344H35M2 380H35M2 458H35" stroke="#7a7a7a"/>
<!-- layout -->
<rect x="7.500" y="124.500" width="22" height="21" fill="#fff" stroke="#333" stroke-width="1.400"/><rect x="8" y="123" width="22" height="4" fill="#333"/><rect x="10" y="128" width="9" height="9" fill="#e8622a"/><path d="M14.500 128V137M10 132.500H19M8 138H30M20 127V138" stroke="#333"/>
<!-- disabled -->
<g fill="none" stroke="#a5a5a5"><circle cx="11" cy="167" r="7"/><path d="M4 167Q11 172 18 167M11 160V174"/><circle cx="26" cy="181" r="7.500"/><path d="M18.500 181H33.500M26 173.500V188.500M26 173.500Q19 181 26 188.500M26 173.500Q33 181 26 188.500M20 176H32M20 186H32"/><path d="M21 162L29 169M28 163V169H22M6 178L14 186M7 185H13V179"/></g>
<!-- tool modes -->
<path d="M9 210V231H24" fill="none" stroke="#222" stroke-width="3"/><path d="M5 216L9 207L13 216ZM20 226.500L28 231L20 235Z" fill="#222"/><path d="M21 208L29 221H13Z" fill="#f08a20" stroke="#444" stroke-width=".8"/>
<path d="M8.500 246V263H24" fill="none" stroke="#eb8a20" stroke-width="2" /><path d="M5 251L8.500 242L12 251ZM22 259.500L29 263L22 266.500Z" fill="#eb8a20" stroke="#333" stroke-width=".4"/>
<g transform="translate(19.500,291) scale(.85)"><use href="#grd"/></g>
<circle cx="9" cy="281" r="2.500" fill="#f08a20" stroke="#333" stroke-width=".6"/><circle cx="18" cy="281" r="2.500" fill="#f08a20" stroke="#333" stroke-width=".6"/><circle cx="9" cy="290.500" r="2.500" fill="#f08a20" stroke="#333" stroke-width=".6"/>
<g transform="translate(18.500,327) scale(.85)"><use href="#grd"/></g><rect x="7" y="315.500" width="12" height="3" fill="#f08a20"/>
<g transform="translate(18.500,363) scale(.85)"><use href="#grd"/></g><rect x="7.500" y="352" width="11.500" height="11.500" fill="#f08a20" stroke="#333" stroke-width=".6"/>
<g transform="translate(17,394) scale(.75)"><use href="#grd"/></g>
<circle cx="9.500" cy="388" r="2.500" fill="#f08a20" stroke="#333" stroke-width=".6"/><circle cx="19" cy="388" r="2.500" fill="#f08a20" stroke="#333" stroke-width=".6"/><circle cx="9.500" cy="398" r="2.500" fill="#f08a20" stroke="#333" stroke-width=".6"/>
<rect x="17" y="397" width="14" height="13" fill="#e8702a" stroke="#333" stroke-width=".7"/><rect x="21" y="400" width="6" height="6" fill="none" stroke="#333" stroke-width="1.300"/><use href="#tri" x="28" y="410"/>
<!-- checker -->
<rect x="7.500" y="429" width="22" height="22" fill="#2a2a2a" stroke="#ee6a2a" stroke-width="1.800"/><path d="M9.500 431h6v6h-6zM21.500 431h6v6h-6zM15.500 437h6v6h-6zM9.500 443h6v6h-6zM21.500 443h6v6h-6z" fill="#eee"/>
<path d="M9 466V486H25" fill="none" stroke="#222" stroke-width="3"/><path d="M5 471L9 463L13 471ZM22 482L28 486L22 490Z" fill="#222"/><rect x="15" y="465" width="14" height="14" fill="#2a2a2a" stroke="#e8622a"/><path d="M16.500 466.500h3.500v3.500h-3.500zM24 466.500h3.500v3.500H24zM20 470.500h4v4h-4zM16.500 474.500h3.500v3.500h-3.500zM24 474.500h3.500v3.500H24z" fill="#eee"/>
<!-- primitives -->
<circle cx="13" cy="519" r="8.500" fill="#e8742a" stroke="#333" stroke-width=".8"/><path d="M4.500 519H21.500M13 510.500V527.500M13 510.500Q7 519 13 527.500" fill="none" stroke="#333" stroke-width=".5"/><path d="M18 507L25 504.500L30.500 507V514L25 516.500L18 514Z" fill="#e8742a" stroke="#333" stroke-width=".7"/><path d="M18 507L25 509.500L30.500 507M25 509.500V516.500" fill="none" stroke="#333" stroke-width=".6"/><path d="M24 516L31 530H19Z" fill="#e8742a" stroke="#333" stroke-width=".7"/>
<!-- transport -->
<rect x="693.500" y="729.500" width="119" height="16" rx="3" fill="#8a8a8a" stroke="#555"/><rect x="819.500" y="729.500" width="60" height="16" rx="3" fill="#8a8a8a" stroke="#555"/><rect x="886.500" y="729.500" width="138" height="16" rx="3" fill="#d6d6d6" stroke="#555"/>
<rect x="965" y="730" width="39" height="15" fill="#8a8a8a"/>
<path d="M713 730V745M733 730V745M753 730V745M773 730V745M793 730V745M839 730V745M859 730V745M905 730V745M925 730V745M945 730V745M965 730V745M985 730V745M1005 730V745" stroke="#777"/>
<g fill="#2e2e2e"><path d="M696 733h2v9h-2zM705 733v9l-5-4.500zM710 733v9l-5-4.500z"/><path d="M724 733v9l-5-4.500zM725 733h2q-1.500 4.500 0 9h-2q-1.500-4.500 0-9z"/><path d="M778 733q1.500 4.500 0 9h2q1.500-4.500 0-9zM782 733v9l5-4.500z"/><path d="M797 733v9l5-4.500zM802 733v9l5-4.500zM807 733h2v9h-2z"/></g>
<path d="M748 732v11l-9-5.500z" fill="#25d35a" stroke="#111" stroke-width=".8"/><path d="M759 732v11l9-5.500z" fill="#25d35a" stroke="#111" stroke-width=".8"/>
<circle cx="829" cy="737" r="6.500" fill="#7c7c7c" stroke="#555"/><path d="M826 740l6-6" stroke="#a8a8a8" stroke-width="1.500"/>
<circle cx="849" cy="737.500" r="6.500" fill="#d63c3c" stroke="#222"/><path d="M849 733v9M846 734q-2 3.500 0 7M852 734q2 3.500 0 7" fill="none" stroke="#222"/>
<circle cx="869" cy="737.500" r="6.500" fill="#e04545" stroke="#222"/><text x="869" y="741.500" text-anchor="middle" font-size="11" font-weight="bold" fill="#222">?</text>
<use href="#mv" transform="translate(895 737.500) scale(.55)"/>
<rect x="910.500" y="732.500" width="10" height="10" fill="#e8822a" stroke="#333" stroke-width=".6"/><path d="M911 738h4.500v4M915.500 738l5-5" fill="none" stroke="#333" stroke-width=".5"/>
<circle cx="935" cy="737.500" r="5" fill="none" stroke="#d47a20" stroke-width="2"/>
<circle cx="955" cy="737.500" r="6.500" fill="none" stroke="#d47a20" stroke-width="1.400"/><text x="955" y="741" text-anchor="middle" font-size="9" font-weight="bold" fill="#222">P</text>
<g fill="#d47a20"><rect x="970" y="732" width="2" height="2"/><rect x="974" y="732" width="2" height="2"/><rect x="978" y="732" width="2" height="2"/></g><g fill="#333"><rect x="970" y="736" width="2" height="2"/><rect x="974" y="736" width="2" height="2"/><rect x="978" y="736" width="2" height="2"/><rect x="970" y="741" width="2" height="2"/><rect x="974" y="741" width="2" height="2"/><rect x="978" y="741" width="2" height="2"/></g>
<path d="M990 736h3l4-3v9l-3-2.500-1 3-1.500-.500 .5-3h-2z" fill="#333"/><path d="M999 733q2 2 1 5" stroke="#ccc" fill="none"/>
<rect x="1005" y="730" width="19" height="15" fill="#d6d6d6"/><rect x="1007" y="733" width="9" height="11" fill="#eee" stroke="#555" stroke-width=".7"/><path d="M1009 736h5M1009 738.500h5M1009 741h5" stroke="#666"/><rect x="1016" y="731" width="6" height="6" fill="#b8862a" stroke="#444" stroke-width=".6"/><path d="M1018 745h5v-5z" fill="#222"/>
<!-- slider end arrows -->
<path d="M141 734v6l-6-3z" fill="#d0d0d0"/><path d="M591 734v6l6-3z" fill="#d0d0d0"/>
<!-- viewport header icons -->
<g fill="#333"><path d="M964 112l2.500 3h-5zM964 124l2.500-3h-5zM958 118l3-2.500v5zM970 118l-3-2.500v5z"/><circle cx="964" cy="118" r="1.800"/></g>
<path d="M981 111.500l4.500 5h-2.500v2h2.500l-4.500 5.500-4.500-5.500h2.500v-2h-2.500z" fill="#333"/>
<circle cx="998" cy="118" r="4.800" fill="none" stroke="#333" stroke-width="1.900"/><path d="M996 112l3.500.5-2.500 3zM1000 124l-3.500-.5 2.500-3z" fill="#333"/><circle cx="998" cy="118" r="1" fill="#333"/>
<rect x="1010.500" y="112.500" width="11" height="11" fill="#8f8f8f" stroke="#333"/><rect x="1011" y="112" width="11" height="2.500" fill="#333"/>
<!-- object manager icons -->
<circle cx="1371.500" cy="98" r="4.500" fill="none" stroke="#222" stroke-width="1.400"/><path d="M1375 101.500l5 5" stroke="#222" stroke-width="2"/>
<path d="M1384 101l7-7 7 7M1387 100v6.500h8V100" fill="#8f8f8f" stroke="#222" stroke-width="1.600"/>
<path d="M1405 101q6-5 12 0q-6 5-12 0z" fill="none" stroke="#333"/>
<rect x="1423.500" y="94.500" width="11" height="13" fill="#a0a0a0" stroke="#333"/><rect x="1424" y="94" width="11" height="2" fill="#333"/><path d="M1426 102h6M1429 99v6" stroke="#222" stroke-width="1.500"/>
<path d="M1037.500 115v10.500h8" fill="none" stroke="#6a6a6a"/>
<path d="M1054 119.500l5 2.500v5l-5 2.500-5-2.500v-5z" fill="#6cc5e8" stroke="#3a6a80" stroke-width=".6"/><path d="M1049 122l5 2.500 5-2.500M1054 124.500v5" fill="none" stroke="#3a6a80" stroke-width=".6"/>
<circle cx="1109" cy="124" r="3.800" fill="#7c7c7c"/><circle cx="1122" cy="121" r="2.500" fill="#6c6c6c"/><circle cx="1122" cy="128.500" r="2.500" fill="#6c6c6c"/><path d="M1127 126l2.500 2.500 5-6" fill="none" stroke="#58e098"/>
<circle cx="1145" cy="119.500" r="3.500" fill="#c08040" stroke="#444" stroke-width=".6"/><circle cx="1152" cy="126" r="4" fill="#c07a30" stroke="#444" stroke-width=".6"/>
<!-- attr icons -->
<path d="M1330 502.500v11l-13-5.500z" fill="#1f1f1f"/><path d="M1337 503l10 5-10 5z" fill="none" stroke="#8a8a8a"/><path d="M1368.500 502l6 11h-12z" fill="#8a8a8a" stroke="#8e8e8e"/>
<path d="M1388 506h9v8h-9z" fill="#333"/><path d="M1389.500 506v-2.500a3 3 0 0 1 6 0" fill="none" stroke="#333" stroke-width="1.400"/><rect x="1392" y="509" width="1" height="2" fill="#aaa"/>
<circle cx="1411.500" cy="504.500" r="2.800" fill="none" stroke="#333" stroke-width="1.200"/><circle cx="1411.500" cy="511" r="2.800" fill="none" stroke="#333" stroke-width="1.200"/>
<rect x="1423.500" y="501.500" width="11" height="13" fill="#a0a0a0" stroke="#333"/><rect x="1424" y="501" width="11" height="2" fill="#333"/><path d="M1426 509h6M1429 506v6" stroke="#222" stroke-width="1.500"/>
<path d="M1035 587h7l-3.500 4z" fill="#333"/>
<path d="M1042 703h8l-4 4.500z" fill="#cfcfcf"/>
<circle cx="1044" cy="723.500" r="2" fill="none" stroke="#111"/><circle cx="1044" cy="781.500" r="2" fill="none" stroke="#111"/><circle cx="1044" cy="874.500" r="2" fill="none" stroke="#111"/>
<path d="M1113 720h7l-3.500 3.500z" fill="#222"/>
<g fill="#fff" stroke="#222" stroke-width=".8"><path d="M1408.500 727l3.500 4h-7z"/><path d="M1408.500 746l3.500 4h-7z"/><path d="M1408.500 765l3.500 4h-7z"/></g>
<path d="M1136 759v5l3-2.500zM1133 804v5l3-2.500zM1133 889v4l3-2z" fill="#d0d0d0"/>
<path d="M1429.500 586l3 5h-6z" fill="#dcdcdc"/><path d="M1429.500 892l3-5h-6z" fill="#dcdcdc"/>
<path d="M1431 893l7-7M1434 893l4-4" stroke="#b8b8b8"/>
</svg>

<script>
(function(){
var cx=531.5,cy=405,f=741,D=893,ph=20*Math.PI/180,s=Math.sin(ph),c=Math.cos(ph),R=Math.SQRT2,E=4500,h='';
function P(x,z){var r=(x+z)/R,g=(z-x)/R,Z=g*c+D;return [(cx+f*r/Z).toFixed(1),(cy-f*g*s/Z).toFixed(1)];}
var lim=(D-40)*R/c;
for(var k=-E;k<=E;k+=100){
 var col=k===0?'#4b4b4b':(k%1000===0?'#535353':'#626262');
 var a=P(k,Math.max(-E,k-lim)),b=P(k,E);
 h+='<line x1="'+a[0]+'" y1="'+a[1]+'" x2="'+b[0]+'" y2="'+b[1]+'" stroke="'+col+'"/>';
 a=P(-E,k);b=P(Math.min(E,k+lim),k);
 h+='<line x1="'+a[0]+'" y1="'+a[1]+'" x2="'+b[0]+'" y2="'+b[1]+'" stroke="'+col+'"/>';
}
document.getElementById('grid').innerHTML=h;
})();
</script>
</body></html>
